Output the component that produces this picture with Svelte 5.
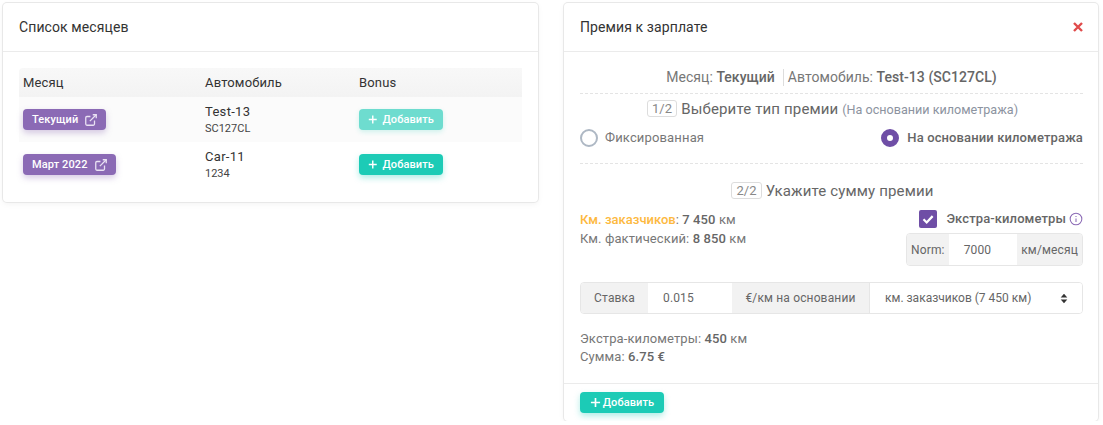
<script>
	const months = [
		{ name: 'Текущий', car: 'Test-13', plate: 'SC127CL', faded: true },
		{ name: 'Март 2022', car: 'Car-11', plate: '1234', faded: false }
	];
</script>

<div class="page">
	<section class="card list-card">
		<header class="card-header"><h2>Список месяцев</h2></header>
		<div class="list-body">
			<table class="months">
				<thead>
					<tr>
						<th class="col-month">Месяц</th>
						<th class="col-car">Автомобиль</th>
						<th>Bonus</th>
					</tr>
				</thead>
				<tbody>
					{#each months as month}
						<tr>
							<td>
								<button class="btn btn-purple">
									{month.name}
									<svg class="ext" viewBox="0 0 24 24" aria-hidden="true">
										<path d="M18 13v6a2 2 0 0 1-2 2H5a2 2 0 0 1-2-2V8a2 2 0 0 1 2-2h6" />
										<path d="M15 3h6v6" />
										<path d="M10 14 21 3" />
									</svg>
								</button>
							</td>
							<td>
								<div class="car">{month.car}</div>
								<div class="plate">{month.plate}</div>
							</td>
							<td>
								<button class="btn btn-teal" class:faded={month.faded}>
									<svg class="plus" viewBox="0 0 12 12" aria-hidden="true"><path d="M6 1v10M1 6h10" /></svg>
									Добавить
								</button>
							</td>
						</tr>
					{/each}
				</tbody>
			</table>
		</div>
	</section>

	<section class="card form-card">
		<header class="card-header between">
			<h2>Премия к зарплате</h2>
			<svg class="close" viewBox="0 0 12 12" aria-hidden="true"><path d="M2 2l8 8M10 2l-8 8" /></svg>
		</header>

		<div class="form-body">
			<div class="summary">
				<span class="summary-month">Месяц: <b>Текущий</b></span>
				<span class="summary-car">Автомобиль: <b>Test-13 (SC127CL)</b></span>
			</div>

			<div class="step step-one">
				<span class="step-num">1/2</span> Выберите тип премии
				<small>(На основании километража)</small>
			</div>

			<div class="radios">
				<label class="radio"><span class="dot"></span>Фиксированная</label>
				<label class="radio checked"><span class="dot"></span>На основании километража</label>
			</div>

			<div class="step step-two"><span class="step-num">2/2</span> Укажите сумму премии</div>

			<div class="km-row">
				<div class="km-lines">
					<p><span class="accent">Км. заказчиков</span>: <b>7 450</b> км</p>
					<p>Км. фактический: <b>8 850</b> км</p>
				</div>
				<div class="extra">
					<div class="extra-check">
						<span class="checkbox">
							<svg viewBox="0 0 12 12" aria-hidden="true"><path d="M3 6.2l2.1 2.1 4-4.2" /></svg>
						</span>
						<span class="extra-label">Экстра-километры</span>
						<svg class="info" viewBox="0 0 24 24" aria-hidden="true">
							<circle cx="12" cy="12" r="10" />
							<path d="M12 11v6M12 7v1.6" />
						</svg>
					</div>
					<div class="group norm-group">
						<span class="addon">Norm:</span>
						<span class="field norm-field">7000</span>
						<span class="addon">км/месяц</span>
					</div>
				</div>
			</div>

			<div class="group rate-group">
				<span class="addon rate-label">Ставка</span>
				<span class="field rate-field">0.015</span>
				<span class="addon rate-unit">€/км на основании</span>
				<span class="field select-field">
					км. заказчиков (7 450 км)
					<svg class="carets" viewBox="0 0 8 12" aria-hidden="true"><path d="M4 .8 7.6 4.8H.4zM4 11.2.4 7.2h7.2z" /></svg>
				</span>
			</div>

			<div class="totals">
				<p>Экстра-километры: <b>450</b> км</p>
				<p>Сумма: <b>6.75 €</b></p>
			</div>
		</div>

		<footer class="form-footer">
			<button class="btn btn-teal footer-add">
				<svg class="plus" viewBox="0 0 12 12" aria-hidden="true"><path d="M6 1v10M1 6h10" /></svg>
				Добавить
			</button>
		</footer>
	</section>
</div>

<style>
	:global(body) {
		background: #fff;
		font-family: Roboto, 'Liberation Sans', sans-serif;
		font-size: 13px;
		color: #6e6b7b;
	}

	.page {
		display: flex;
		align-items: flex-start;
		gap: 26px;
		padding: 3px 5px 0 3px;
	}

	.card {
		background: #fff;
		border-radius: 4px;
		box-shadow: 0 0 0 1px #e8e8e8, 0 2px 6px rgba(0, 0, 0, 0.05);
	}

	.list-card {
		width: 535px;
		height: 199px;
	}

	.form-card {
		width: 534px;
		height: 418px;
		display: flex;
		flex-direction: column;
	}

	.card-header {
		height: 48px;
		box-sizing: content-box;
		display: flex;
		align-items: center;
		padding: 0 16px;
		border-bottom: 1px solid #ebebeb;
	}

	.between {
		justify-content: space-between;
	}

	h2 {
		margin: 0;
		font-size: 14px;
		font-weight: 400;
		letter-spacing: 0.1px;
		color: #333;
	}

	.close {
		width: 12px;
		height: 12px;
		margin-right: -2px;
		fill: none;
		stroke: #e04b4b;
		stroke-width: 2.4;
	}

	.list-body {
		padding: 16px;
	}

	.months {
		width: 100%;
		border-collapse: collapse;
		table-layout: fixed;
	}

	.months th {
		height: 29px;
		padding: 0 4px;
		background: linear-gradient(#f8f8f8, #f3f3f3);
		text-align: left;
		font-size: 13px;
		font-weight: 400;
		letter-spacing: 0.15px;
		color: #333;
	}

	.col-month {
		width: 174px;
		border-top-left-radius: 4px;
	}

	.col-car {
		width: 146px;
	}

	.months td {
		height: 45px;
		padding: 0 4px;
		vertical-align: middle;
	}

	.months tbody tr:first-child {
		background: #fbfbfb;
	}

	.car {
		font-size: 13px;
		letter-spacing: 0.3px;
		line-height: 16px;
		color: #333;
	}

	.plate {
		font-size: 11px;
		line-height: 14px;
		margin-top: 2px;
		color: #444;
	}

	.btn {
		display: inline-flex;
		align-items: center;
		height: 21px;
		padding: 0 9px;
		border: 0;
		border-radius: 4px;
		font-family: inherit;
		font-size: 11px;
		font-weight: 500;
		letter-spacing: 0.1px;
		color: #fff;
	}

	.btn-purple {
		background: #8b6ab5;
		box-shadow: 0 3px 6px rgba(139, 106, 181, 0.35);
		gap: 6px;
		padding-right: 8px;
	}

	.btn-teal {
		width: 84px;
		justify-content: center;
		gap: 5px;
		background: #1ccbb6;
		box-shadow: 0 3px 6px rgba(28, 203, 182, 0.35);
	}

	.btn-teal.faded {
		background: #6edccf;
		box-shadow: 0 2px 5px rgba(28, 203, 182, 0.2);
	}

	.footer-add {
		gap: 2px;
	}

	.ext {
		width: 14px;
		height: 14px;
		fill: none;
		stroke: #e9e1f3;
		stroke-width: 2.2;
	}

	.plus {
		width: 11px;
		height: 11px;
		fill: none;
		stroke: #fff;
		stroke-width: 1.8;
	}

	.form-body {
		flex: 1;
		padding: 0 15px 0 16px;
		letter-spacing: 0.15px;
	}

	b {
		font-weight: 500;
		color: #666;
	}

	.summary {
		display: flex;
		justify-content: center;
		align-items: center;
		height: 42px;
		padding-top: 9px;
		box-sizing: border-box;
		border-bottom: 1px dashed #e4e4e4;
		font-size: 14px;
		letter-spacing: 0.05px;
		color: #777;
	}

	.summary-month {
		padding-right: 8px;
		border-right: 1px solid #ddd;
		line-height: 17px;
	}

	.summary-car {
		padding-left: 4px;
	}

	.step {
		text-align: center;
		font-size: 15px;
		color: #666;
		line-height: 20px;
	}

	.step small {
		font-size: 12.6px;
		color: #8c93a0;
		letter-spacing: 0;
	}

	.step-one {
		margin-top: 5px;
		padding-left: 2px;
	}

	.step-two {
		margin-top: 17px;
		padding-left: 2px;
	}

	.step-num {
		display: inline-block;
		height: 15px;
		padding: 0 4px;
		border: 1px solid #ddd;
		border-radius: 3px;
		font-size: 13px;
		line-height: 15px;
		color: #888;
		vertical-align: 1px;
	}

	.radios {
		display: flex;
		justify-content: space-between;
		align-items: center;
		height: 44px;
		padding-bottom: 8px;
		box-sizing: border-box;
		border-bottom: 1px dashed #e4e4e4;
	}

	.radio {
		display: flex;
		align-items: center;
		gap: 7px;
		color: #777;
	}

	.radio.checked {
		gap: 8px;
		font-weight: 500;
		letter-spacing: 0.12px;
		color: #666;
	}

	.dot {
		width: 18px;
		height: 18px;
		box-sizing: border-box;
		border: 2px solid #aeb8c4;
		border-radius: 50%;
	}

	.checked .dot {
		border: 6px solid #6f4ea6;
		background: #fff;
	}

	.km-row {
		display: flex;
		justify-content: space-between;
		margin-top: 8px;
	}

	.km-lines {
		padding-top: 1px;
	}

	p {
		margin: 0;
		line-height: 19px;
		letter-spacing: 0.1px;
		color: #777;
	}

	.accent {
		color: #fdb93f;
		letter-spacing: 0;
		font-weight: 500;
	}

	.extra {
		display: flex;
		flex-direction: column;
		align-items: flex-end;
	}

	.extra-check {
		display: flex;
		align-items: center;
		height: 19px;
	}

	.checkbox {
		display: flex;
		width: 18px;
		height: 18px;
		border-radius: 2px;
		background: #6f4ea6;
		margin-right: 9px;
	}

	.checkbox svg {
		width: 18px;
		height: 18px;
		fill: none;
		stroke: #fff;
		stroke-width: 1.5;
	}

	.extra-label {
		font-weight: 500;
		letter-spacing: 0.1px;
		color: #666;
	}

	.info {
		width: 14px;
		height: 14px;
		margin-left: 3px;
		fill: none;
		stroke: #8b6ab5;
		stroke-width: 1.8;
	}

	.group {
		display: flex;
		box-sizing: border-box;
		border: 1px solid #e6e6e6;
		border-radius: 4px;
		overflow: hidden;
		font-size: 12px;
	}

	.addon {
		display: flex;
		align-items: center;
		justify-content: center;
		background: #f2f2f2;
		color: #666;
	}

	.field {
		display: flex;
		align-items: center;
		background: #fff;
		color: #666;
	}

	.norm-group {
		width: 177px;
		height: 33px;
		margin-top: 5px;
	}

	.norm-group .addon {
		padding: 0 4px;
		flex: none;
	}

	.norm-field {
		flex: 1;
		padding-left: 15px;
	}

	.rate-group {
		height: 32px;
		margin-top: 16px;
	}

	.rate-label {
		width: 67px;
		flex: none;
	}

	.rate-field {
		width: 84px;
		flex: none;
		padding-left: 15px;
		box-sizing: border-box;
	}

	.rate-unit {
		width: 137px;
		flex: none;
	}

	.select-field {
		flex: 1;
		justify-content: space-between;
		padding: 0 14px 0 15px;
		border-left: 1px solid #e6e6e6;
		letter-spacing: 0;
	}

	.carets {
		width: 8px;
		height: 11px;
		fill: #333;
	}

	.totals {
		margin-top: 16px;
	}

	.totals p {
		line-height: 18px;
	}

	.form-footer {
		height: 38px;
		padding: 8px 16px 0;
		box-sizing: border-box;
		border-top: 1px solid #ebebeb;
	}
</style>
